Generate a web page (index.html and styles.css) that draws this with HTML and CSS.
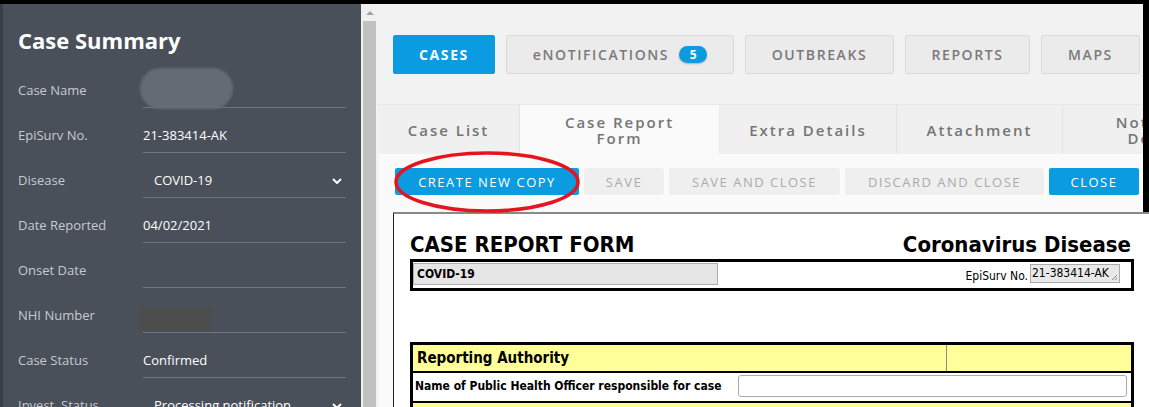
FILE: index.html
```html
<!DOCTYPE html>
<html lang="en">
<head>
<meta charset="utf-8">
<title>Case Report Form</title>
<link rel="stylesheet" href="styles.css">
</head>
<body>
<div class="app">
  <aside class="sidebar">
    <h1 class="sb-title">Case Summary</h1>
    <div class="sb-row">
      <span class="sb-label">Case Name</span><span class="sb-value"></span>
      <span class="redact-pill"></span>
    </div>
    <div class="sb-row">
      <span class="sb-label">EpiSurv No.</span><span class="sb-value">21-383414-AK</span>
    </div>
    <div class="sb-row">
      <span class="sb-label">Disease</span>
      <span class="sb-value select">COVID-19<svg class="chev" width="10" height="6" viewBox="0 0 10 6"><path d="M1 1l4 4 4-4" fill="none" stroke="#fff" stroke-width="2"/></svg></span>
    </div>
    <div class="sb-row">
      <span class="sb-label">Date Reported</span><span class="sb-value">04/02/2021</span>
    </div>
    <div class="sb-row">
      <span class="sb-label">Onset Date</span><span class="sb-value"></span>
    </div>
    <div class="sb-row">
      <span class="sb-label">NHI Number</span><span class="sb-value"></span>
      <span class="redact-box"></span>
    </div>
    <div class="sb-row">
      <span class="sb-label">Case Status</span><span class="sb-value">Confirmed</span>
    </div>
    <div class="sb-row">
      <span class="sb-label">Invest. Status</span>
      <span class="sb-value select">Processing notification<svg class="chev" width="10" height="6" viewBox="0 0 10 6"><path d="M1 1l4 4 4-4" fill="none" stroke="#fff" stroke-width="2"/></svg></span>
    </div>
  </aside>

  <div class="scroll">
    <span class="scroll-arrow"></span>
    <span class="scroll-track"></span>
  </div>

  <main class="content">
    <div class="upper">
      <nav class="topnav">
        <a class="nav-btn active w-cases">CASES</a>
        <a class="nav-btn w-enot">eNOTIFICATIONS <span class="badge">5</span></a>
        <a class="nav-btn w-outb">OUTBREAKS</a>
        <a class="nav-btn w-rep">REPORTS</a>
        <a class="nav-btn w-maps">MAPS</a>
      </nav>

      <div class="tabs">
        <div class="tab t1">Case List</div>
        <div class="tab t2 active">Case Report<br>Form</div>
        <div class="tab t3">Extra Details</div>
        <div class="tab t4">Attachment</div>
        <div class="tab t5">Notifying<br>Doctor</div>
      </div>

      <div class="toolbar">
        <div class="btn-wrap">
          <button class="tb-btn primary b1">CREATE NEW COPY</button>
          <svg class="annot" width="188" height="64" viewBox="0 0 188 64"><ellipse cx="94" cy="32" rx="91" ry="29" fill="none" stroke="#e5141d" stroke-width="3.5"/></svg>
        </div>
        <button class="tb-btn b2">SAVE</button>
        <button class="tb-btn b3">SAVE AND CLOSE</button>
        <button class="tb-btn b4">DISCARD AND CLOSE</button>
        <button class="tb-btn primary b5">CLOSE</button>
      </div>
    </div>

    <div class="lower">
      <div class="gutter"></div>
      <div class="frame">
        <div class="form">
          <div class="title-row">
            <span>CASE REPORT FORM</span>
            <span>Coronavirus Disease</span>
          </div>
          <div class="head-box">
            <div class="disease-field">COVID-19</div>
            <div class="epi-group">
              <span class="epi-label">EpiSurv No.</span>
              <div class="epi-field">21-383414-AK<svg class="grip" width="7" height="7" viewBox="0 0 7 7"><path d="M6 1L1 6M6 4L4 6" stroke="#8a8a8a" stroke-width="1"/></svg></div>
            </div>
          </div>

          <div class="ra-table">
            <div class="ra-head">
              <div class="ra-head-cell">Reporting Authority</div>
              <div class="ra-head-cell rest"></div>
            </div>
            <div class="ra-row">
              <span class="ra-label">Name of Public Health Officer responsible for case</span>
              <div class="ra-input"></div>
            </div>
            <div class="ra-next"></div>
          </div>
        </div>
      </div>
    </div>
  </main>
</div>
</body>
</html>
```

FILE: styles.css
```css
* { box-sizing: border-box; }
html, body { margin: 0; padding: 0; }
body {
  width: 1149px;
  height: 407px;
  overflow: hidden;
  background: #000;
  padding-top: 4px;
  font-family: "Open Sans", "Noto Sans", sans-serif;
}
.app { display: flex; height: 403px; overflow: hidden; }

/* ---------- sidebar ---------- */
.sidebar {
  width: 361px;
  flex: none;
  background: #49505a;
  border-left: 3px solid #393f47;
  padding: 0 15px;
  color: #fff;
  overflow: hidden;
}
.sb-title {
  margin: 0;
  height: 59px;
  padding-top: 21px;
  font-size: 22px;
  line-height: 30px;
  font-weight: 700;
  color: #fff;
}
.sb-row { position: relative; display: flex; height: 45px; }
.sb-label {
  width: 125px;
  flex: none;
  padding-top: 18px;
  font-size: 13px;
  line-height: 18px;
  color: #c6cacf;
  white-space: nowrap;
}
.sb-value {
  flex: 1;
  display: flex;
  justify-content: space-between;
  align-items: flex-start;
  padding-top: 18px;
  font-size: 13px;
  line-height: 18px;
  color: #fff;
  border-bottom: 1px solid #687789;
  white-space: nowrap;
}
.sb-value.select { padding-left: 11px; padding-right: 4px; }
.chev { margin-top: 7px; }
.redact-pill {
  position: absolute;
  left: 122px; top: 5px;
  width: 93px; height: 41px;
  border-radius: 21px;
  background: #646b74;
  filter: blur(1px);
}
.redact-box {
  position: absolute;
  left: 120px; top: 19px;
  width: 73px; height: 24px;
  background: #4d4d4d;
}

/* ---------- scroll column ---------- */
.scroll {
  width: 15px;
  flex: none;
  background: #f1f1f1;
  display: flex;
  flex-direction: column;
  padding-top: 7px;
}
.scroll-arrow {
  width: 0; height: 0;
  margin-left: 5px;
  border-left: 4px solid transparent;
  border-right: 4px solid transparent;
  border-bottom: 4px solid #a3a3a3;
}
.scroll-track {
  flex: 1;
  margin: 6px 0 0 2px;
  width: 13px;
  background: #c1c1c1;
}

/* ---------- main content ---------- */
.content { flex: 1; min-width: 0; display: flex; flex-direction: column; }
.upper { margin-right: 6px; background: #f2f2f2; }

.topnav { display: flex; gap: 11px; padding: 31px 0 0 17px; }
.nav-btn {
  height: 39px;
  display: flex;
  align-items: center;
  justify-content: center;
  background: #ebebeb;
  border: 1px solid #d9d9d9;
  border-radius: 2px;
  color: #7a7a7a;
  font-size: 14px;
  font-weight: 600;
  letter-spacing: 1.6px;
  white-space: nowrap;
}
.nav-btn.active { background: #0b9be0; border-color: #0b9be0; color: #fff; font-weight: 700; }
.w-cases { width: 102px; }
.w-enot { width: 228px; }
.w-outb { width: 149px; }
.w-rep { width: 125px; }
.w-maps { width: 99px; }
.badge {
  display: inline-flex;
  align-items: center;
  justify-content: center;
  width: 28px; height: 17px;
  margin-left: 10px;
  border-radius: 9px;
  background: #0b9be0;
  color: #fff;
  font-size: 12px;
  font-weight: 700;
  letter-spacing: 0;
  box-shadow: 0 1px 2px rgba(0,0,0,0.25);
}

.tabs {
  display: flex;
  margin: 30px 0 0 2px;
  height: 50px;
  border-top: 1px solid #e7e7e7;
  overflow: hidden;
}
.tab {
  flex: none;
  display: flex;
  align-items: center;
  justify-content: center;
  text-align: center;
  background: #f0f0f0;
  border-right: 1px solid #e3e3e3;
  color: #757575;
  font-size: 15px;
  line-height: 16px;
  font-weight: 600;
  letter-spacing: 2px;
  white-space: nowrap;
}
.tab.active { background: #fafafa; border-right-color: #ececec; }
.t1 { width: 142px; }
.t2 { width: 200px; }
.t3 { width: 177px; }
.t4 { width: 166px; }
.t5 { width: 190px; border-right: none; }

.toolbar {
  display: flex;
  gap: 5px;
  margin-left: 2px;
  padding: 14px 0 17px 17px;
  background: #fafafa;
}
.btn-wrap { position: relative; display: flex; }
.tb-btn {
  height: 27px;
  border: none;
  border-radius: 2px;
  background: #efefef;
  color: #ababab;
  font-family: "Open Sans", "Noto Sans", sans-serif;
  font-size: 13px;
  letter-spacing: 1.5px;
  padding: 0;
  white-space: nowrap;
}
.tb-btn.primary { background: #0b9be0; color: #fff; }
.b1 { width: 184px; }
.b2 { width: 80px; }
.b3 { width: 171px; }
.b4 { width: 199px; }
.b5 { width: 90px; }
.annot {
  position: absolute;
  left: -2px; top: -18px;
  pointer-events: none;
}

/* ---------- form frame ---------- */
.lower { flex: 1; display: flex; padding-left: 2px; background: #f2f2f2; }
.gutter { width: 15px; flex: none; background: #fafafa; }
.frame {
  flex: 1;
  background: #fff;
  border-top: 2px solid #8a8a8a;
  border-left: 1px solid #222;
  overflow: hidden;
  font-family: "DejaVu Sans Condensed", "DejaVu Sans", sans-serif;
  font-stretch: condensed;
  color: #000;
}
.form { width: 724px; margin-left: 16px; }
.title-row {
  display: flex;
  justify-content: space-between;
  margin-top: 18px;
  padding-right: 3px;
  height: 26px;
  font-size: 22px;
  line-height: 26px;
  font-weight: 700;
}
.head-box {
  margin-top: 1px;
  height: 32px;
  border: 3px solid #000;
  display: flex;
  justify-content: space-between;
  align-items: flex-start;
  padding: 1px 11px 0 0;
}
.disease-field {
  width: 305px;
  height: 22px;
  background: #e6e6e6;
  border: 1px solid #adadad;
  font-size: 12px;
  line-height: 20px;
  font-weight: 700;
  padding-left: 3px;
}
.epi-group { display: flex; align-items: flex-end; gap: 2px; }
.epi-label { font-size: 12px; line-height: 14px; margin-top: 6px; }
.epi-field {
  position: relative;
  width: 90px;
  height: 19px;
  background: #e9e9e9;
  border: 1px solid #aaa;
  font-size: 12px;
  line-height: 17px;
  padding-left: 1px;
}
.grip { position: absolute; right: 1px; bottom: 1px; }

.ra-table {
  margin-top: 51px;
  border: 3px solid #000;
  border-bottom: none;
}
.ra-head { display: flex; height: 28px; background: #ffff99; border-bottom: 2px solid #000; }
.ra-head-cell {
  width: 534px;
  border-right: 1px solid #8a8a8a;
  font-size: 15px;
  line-height: 26px;
  font-weight: 700;
  padding-left: 4px;
}
.ra-head-cell.rest { flex: 1; border-right: none; }
.ra-row {
  display: flex;
  align-items: center;
  justify-content: space-between;
  height: 30px;
  padding: 0 4px 2px 2px;
  border-bottom: 2px solid #000;
}
.ra-label { font-size: 12px; font-weight: 700; white-space: nowrap; }
.ra-input {
  width: 389px;
  height: 22px;
  border: 1px solid #aaa;
  border-radius: 3px;
  background: #fff;
}
.ra-next { height: 20px; background: #ffff99; }
```
